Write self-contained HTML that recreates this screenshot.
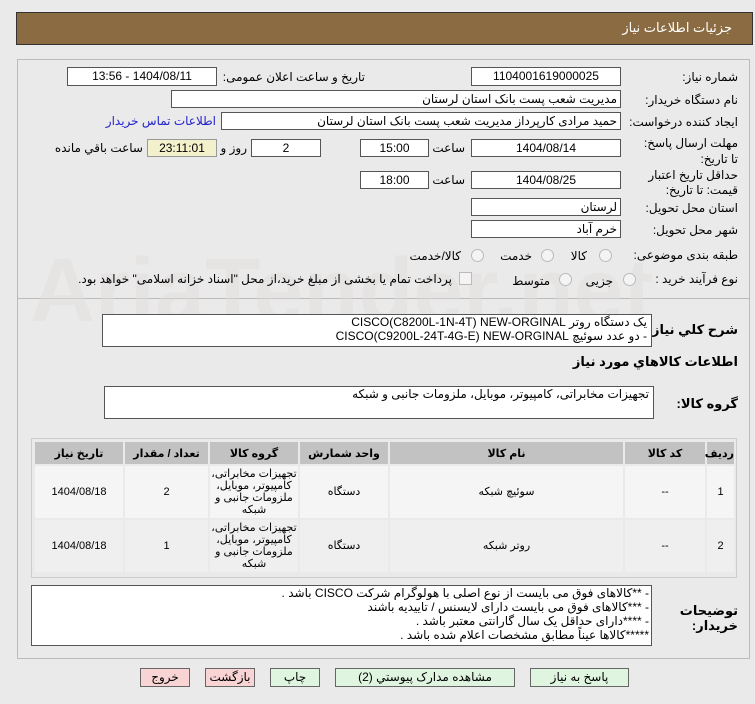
<!DOCTYPE html>
<html><head><meta charset="utf-8"><style>
body{margin:0;width:755px;height:704px;background:#eaeaea;font-family:"Liberation Sans","DejaVu Sans",sans-serif;font-size:12px;color:#000;position:relative;overflow:hidden;direction:rtl}
.a{position:absolute;white-space:nowrap}
.box{position:absolute;background:#fff;border:1px solid #555;box-sizing:border-box;font-size:12px;line-height:16px;text-align:center}
.l{font-size:12px}
.btn{position:absolute;top:668px;height:19px;border:1px solid #666;box-sizing:border-box;text-align:center;font-size:12px;line-height:17px}
.g{background:#dff5df}.r{background:#f8d4d4}
table{position:absolute;left:33px;top:440px;width:703px;border-collapse:separate;border-spacing:2px;font-size:11px;text-align:center;direction:rtl;table-layout:fixed}
th{background:#c2c2c2;height:22px;font-weight:bold;padding:0}
td{background:#f5f5f5;height:52px;line-height:12px;padding:0;overflow:hidden}
.rad{position:absolute;width:11px;height:11px;border-radius:50%;border:1px solid #bbb;background:#f4f4f4}
</style></head><body>
<div class="a" style="left:16px;top:12px;width:735px;height:31px;background:#8b6b42;border:1px solid #333"></div>
<div class="a" style="right:23px;top:20px;color:#fff;font-size:13px">جزئیات اطلاعات نیاز</div>
<div class="a" style="left:17px;top:59px;width:733px;height:600px;border:1px solid #bbb;box-sizing:border-box"></div>
<div class="a" style="left:17px;top:298px;width:733px;height:1px;background:#bbb"></div>
<div class="a" style="left:30px;top:240px;font-size:90px;color:#e2dcdc;font-weight:bold;direction:ltr;opacity:.45">AriaTender.net</div>

<div class="a l" style="right:17px;top:70px">شماره نیاز:</div>
<div class="box" style="left:471px;top:67px;width:150px;height:19px">1104001619000025</div>
<div class="a l" style="right:390px;top:70px">تاریخ و ساعت اعلان عمومی:</div>
<div class="box" style="left:67px;top:67px;width:150px;height:19px">1404/08/11 - 13:56</div>

<div class="a l" style="right:17px;top:93px">نام دستگاه خریدار:</div>
<div class="box" style="left:171px;top:90px;width:450px;height:18px;text-align:right;padding-right:3px">مدیریت شعب پست بانک استان لرستان</div>

<div class="a l" style="right:17px;top:115px">ایجاد کننده درخواست:</div>
<div class="box" style="left:221px;top:112px;width:400px;height:18px;text-align:right;padding-right:3px">حمید مرادی کارپرداز مدیریت شعب پست بانک استان لرستان</div>
<div class="a l" style="right:539px;top:114px;color:#22c">اطلاعات تماس خریدار</div>

<div class="a l" style="right:17px;top:135px;line-height:16px;white-space:normal;width:100px">مهلت ارسال پاسخ: تا تاریخ:</div>
<div class="box" style="left:471px;top:139px;width:150px;height:18px">1404/08/14</div>
<div class="a l" style="right:290px;top:141px">ساعت</div>
<div class="box" style="left:360px;top:139px;width:69px;height:18px">15:00</div>
<div class="box" style="left:251px;top:139px;width:70px;height:18px">2</div>
<div class="a l" style="right:508px;top:141px">روز و</div>
<div class="box" style="left:147px;top:139px;width:70px;height:18px;background:#f3f0cc;border-color:#999">23:11:01</div>
<div class="a l" style="right:612px;top:141px">ساعت باقي مانده</div>

<div class="a l" style="right:17px;top:168px;line-height:15px;white-space:normal;width:100px">حداقل تاریخ اعتبار قیمت: تا تاریخ:</div>
<div class="box" style="left:471px;top:171px;width:150px;height:18px">1404/08/25</div>
<div class="a l" style="right:290px;top:173px">ساعت</div>
<div class="box" style="left:360px;top:171px;width:69px;height:18px">18:00</div>

<div class="a l" style="right:17px;top:201px">استان محل تحویل:</div>
<div class="box" style="left:471px;top:198px;width:150px;height:18px;text-align:right;padding-right:3px">لرستان</div>
<div class="a l" style="right:17px;top:223px">شهر محل تحویل:</div>
<div class="box" style="left:471px;top:220px;width:150px;height:18px;text-align:right;padding-right:3px">خرم آباد</div>

<div class="a l" style="right:17px;top:248px">طبقه بندی موضوعی:</div>
<div class="rad" style="left:599px;top:249px"></div><div class="a l" style="right:168px;top:249px">کالا</div>
<div class="rad" style="left:541px;top:249px"></div><div class="a l" style="right:223px;top:249px">خدمت</div>
<div class="rad" style="left:471px;top:249px"></div><div class="a l" style="right:294px;top:249px">کالا/خدمت</div>

<div class="a l" style="right:17px;top:272px">نوع فرآیند خرید :</div>
<div class="rad" style="left:623px;top:273px"></div><div class="a l" style="right:142px;top:274px">جزیی</div>
<div class="rad" style="left:559px;top:273px"></div><div class="a l" style="right:205px;top:274px">متوسط</div>
<div class="a" style="left:459px;top:272px;width:11px;height:11px;border:1px solid #bbb;background:#f4f4f4"></div>
<div class="a l" style="right:303px;top:272px">پرداخت تمام یا بخشی از مبلغ خرید،از محل "اسناد خزانه اسلامی" خواهد بود.</div>

<div class="a" style="right:17px;top:322px;font-weight:bold;font-size:13px">شرح کلي نیاز:</div>
<div class="box" style="left:102px;top:314px;width:550px;height:33px;text-align:right;padding-right:4px;line-height:14px;font-size:12px">یک دستگاه  روتر CISCO(C8200L-1N-4T) NEW-ORGINAL<br>- دو عدد سوئیچ CISCO(C9200L-24T-4G-E) NEW-ORGINAL</div>
<div class="a" style="right:17px;top:354px;font-weight:bold;font-size:13px">اطلاعات کالاهاي مورد نیاز</div>
<div class="a" style="right:17px;top:396px;font-weight:bold;font-size:13px">گروه کالا:</div>
<div class="box" style="left:104px;top:386px;width:550px;height:33px;text-align:right;padding-right:4px;font-size:12px;line-height:14px">تجهیزات مخابراتی، کامپیوتر، موبایل، ملزومات جانبی و شبکه</div>

<div class="a" style="left:31px;top:438px;width:706px;height:140px;border:1px solid #ccc;box-sizing:border-box"></div>
<table>
<colgroup><col style="width:27px"><col style="width:80px"><col style="width:233px"><col style="width:88px"><col style="width:88px"><col style="width:83px"><col></colgroup>
<tr><th>ردیف</th><th>کد کالا</th><th>نام کالا</th><th>واحد شمارش</th><th>گروه کالا</th><th>تعداد / مقدار</th><th>تاریخ نیاز</th></tr>
<tr><td>1</td><td>--</td><td>سوئیچ شبکه</td><td>دستگاه</td><td>تجهیزات مخابراتی، کامپیوتر، موبایل، ملزومات جانبی و شبکه</td><td>2</td><td>1404/08/18</td></tr>
<tr><td style="background:#efefef">2</td><td style="background:#efefef">--</td><td style="background:#efefef">روتر شبکه</td><td style="background:#efefef">دستگاه</td><td style="background:#efefef">تجهیزات مخابراتی، کامپیوتر، موبایل، ملزومات جانبی و شبکه</td><td style="background:#efefef">1</td><td style="background:#efefef">1404/08/18</td></tr>
</table>

<div class="a" style="right:17px;top:603px;font-weight:bold;font-size:13px;line-height:15px;white-space:normal;width:60px">توضیحات خریدار:</div>
<div class="box" style="left:31px;top:585px;width:621px;height:61px;text-align:right;padding-right:2px;font-size:12px;line-height:14px">-  **کالاهای فوق می بایست از نوع اصلی با هولوگرام شرکت CISCO باشد .<br>- ***کالاهای فوق می بایست دارای  لایسنس / تاییدیه باشند<br>- ****دارای حداقل یک سال گارانتی معتبر  باشد .<br>*****کالاها عیناً مطابق مشخصات اعلام شده باشد .</div>

<div class="btn r" style="left:140px;width:50px">خروج</div>
<div class="btn r" style="left:205px;width:50px">بازگشت</div>
<div class="btn g" style="left:270px;width:50px">چاپ</div>
<div class="btn g" style="left:335px;width:180px">مشاهده مدارک پیوستي (2)</div>
<div class="btn g" style="left:530px;width:99px">پاسخ به نیاز</div>
</body></html>
